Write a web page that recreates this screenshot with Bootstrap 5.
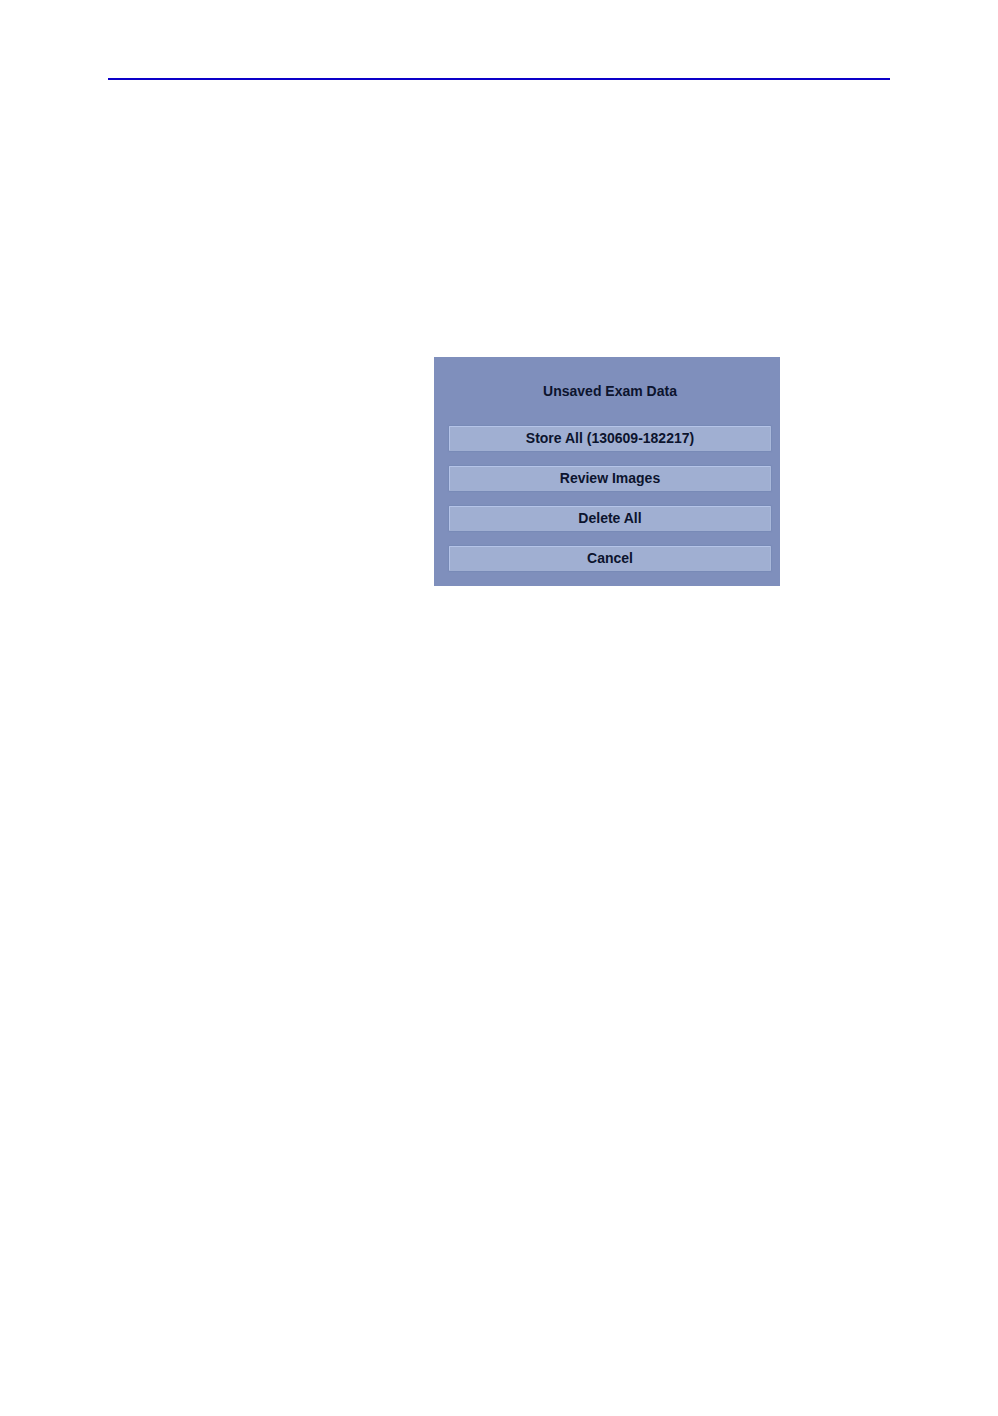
<!DOCTYPE html>
<html lang="en">
<head>
<meta charset="utf-8">
<meta name="viewport" content="width=device-width, initial-scale=1">
<title>Unsaved Exam Data</title>
<link href="https://cdn.jsdelivr.net/npm/bootstrap@5.3.0/dist/css/bootstrap.min.css" rel="stylesheet">
<style>
  body { font-family: "Liberation Sans", Arial, sans-serif; background: #fff; }
  .sheet { padding: 78px 108px 0; }
  .sheet-rule { border-top: 2px solid #0c00c8; opacity: 1; }
  .sheet-body { padding-top: 277px; }
  .side-column { flex: 0 1 326px; }
  .exam-dialog {
    flex: 0 0 346px;
    padding: 24px 9px 15px 15px;
    background: #7f8fbc;
    color: #0c142e;
  }
  .exam-title { font-size: 14px; line-height: 20px; font-weight: 700; margin-bottom: 25px; }
  .exam-actions { gap: 15px; }
  .exam-btn {
    --bs-btn-color: #0c142e;
    --bs-btn-bg: #a0afd2;
    --bs-btn-hover-color: #0c142e;
    --bs-btn-hover-bg: #acbadb;
    --bs-btn-active-color: #0c142e;
    --bs-btn-active-bg: #94a4ca;
    --bs-btn-font-size: 14px;
    --bs-btn-font-weight: 700;
    --bs-btn-line-height: 23px;
    --bs-btn-padding-y: 0px;
    --bs-btn-border-radius: 1px;
    border: 1px solid;
    border-color: #b5c4e8 #a9b8da #a0afd2 #b5c4e8;
    box-shadow: 0 0 1px 1px #788ab6;
  }
</style>
</head>
<body>
<div class="sheet">
  <hr class="sheet-rule m-0">
  <main class="sheet-body d-flex">
    <div class="side-column"></div>
    <section class="exam-dialog" role="dialog" aria-labelledby="exam-title">
      <h1 class="exam-title text-center" id="exam-title">Unsaved Exam Data</h1>
      <div class="exam-actions d-grid">
        <button type="button" class="btn exam-btn">Store All (130609-182217)</button>
        <button type="button" class="btn exam-btn">Review Images</button>
        <button type="button" class="btn exam-btn">Delete All</button>
        <button type="button" class="btn exam-btn">Cancel</button>
      </div>
    </section>
  </main>
</div>
<script src="https://cdn.jsdelivr.net/npm/bootstrap@5.3.0/dist/js/bootstrap.bundle.min.js"></script>
</body>
</html>
